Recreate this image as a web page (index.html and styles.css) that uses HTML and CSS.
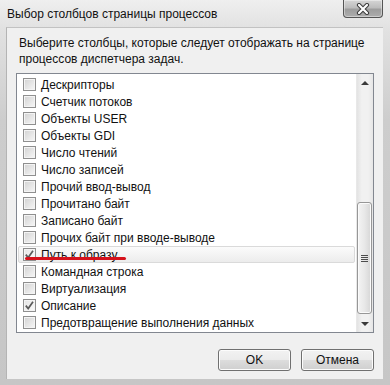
FILE: index.html
```html
<!DOCTYPE html>
<html lang="ru">
<head>
    <meta charset="UTF-8">
    <title>Выбор столбцов страницы процессов</title>
    <link rel="stylesheet" href="styles.css">
</head>
<body>
    <div class="window">
        <div class="titlebar">
            <span class="title">Выбор столбцов страницы процессов</span>
            <button class="close-btn" type="button">
                <svg width="14" height="12" viewBox="0 0 14 12">
                    <path d="M3 2 L11 10 M11 2 L3 10" stroke="#3c3c3c" stroke-width="4.2" stroke-linecap="round"/>
                    <path d="M3 2 L11 10 M11 2 L3 10" stroke="#ffffff" stroke-width="2.2" stroke-linecap="round"/>
                </svg>
            </button>
        </div>

        <div class="client">
            <p class="hint">Выберите столбцы, которые следует отображать на странице<br>процессов диспетчера задач.</p>

            <div class="listbox">
                <ul class="items">
                    <li class="item"><span class="check"></span>Дескрипторы</li>
                    <li class="item"><span class="check"></span>Счетчик потоков</li>
                    <li class="item"><span class="check"></span>Объекты USER</li>
                    <li class="item"><span class="check"></span>Объекты GDI</li>
                    <li class="item"><span class="check"></span>Число чтений</li>
                    <li class="item"><span class="check"></span>Число записей</li>
                    <li class="item"><span class="check"></span>Прочий ввод-вывод</li>
                    <li class="item"><span class="check"></span>Прочитано байт</li>
                    <li class="item"><span class="check"></span>Записано байт</li>
                    <li class="item"><span class="check"></span>Прочих байт при вводе-выводе</li>
                    <li class="item hot">
                        <span class="check checked">
                            <svg width="11" height="11" viewBox="0 0 11 11"><path d="M1.8 5.6 L4.2 8.6 L9 1.8" fill="none" stroke="#5a5a5a" stroke-width="1.7"/></svg>
                        </span>Путь к образу
                    </li>
                    <li class="item"><span class="check"></span>Командная строка</li>
                    <li class="item"><span class="check"></span>Виртуализация</li>
                    <li class="item">
                        <span class="check checked">
                            <svg width="11" height="11" viewBox="0 0 11 11"><path d="M1.8 5.6 L4.2 8.6 L9 1.8" fill="none" stroke="#5a5a5a" stroke-width="1.7"/></svg>
                        </span>Описание
                    </li>
                    <li class="item"><span class="check"></span>Предотвращение выполнения данных</li>
                </ul>

                <div class="scrollbar">
                    <span class="arrow up"></span>
                    <div class="track">
                        <div class="thumb"><span class="grip"></span></div>
                    </div>
                    <span class="arrow down"></span>
                </div>
            </div>

            <div class="buttons">
                <button type="button" class="btn">OK</button>
                <button type="button" class="btn">Отмена</button>
            </div>
        </div>
    </div>
</body>
</html>
```

FILE: styles.css
```css
body {
    margin: 0;
    background: #ffffff;
    font-family: "Liberation Sans", Arial, sans-serif;
    font-size: 12px;
    color: #000;
}

.window {
    width: 390px;
    height: 385px;
    display: flex;
    flex-direction: column;
    background: linear-gradient(#efefef 0, #e2e2e2 27px, #cdcdcd 120px, #c6c6c6 100%);
}

/* title bar */
.titlebar {
    height: 27px;
    display: flex;
    justify-content: space-between;
    align-items: flex-start;
    padding-left: 7px;
    padding-right: 7px;
}

.title {
    font-size: 12px;
    line-height: 28px;
    color: #111;
}

.close-btn {
    width: 40px;
    height: 18px;
    margin: 0;
    padding: 0;
    border: 1px solid #555555;
    border-top: none;
    border-radius: 0 0 4px 4px;
    background: linear-gradient(#d6d6d6 0, #bdbdbd 45%, #9d9d9d 55%, #adadad 100%);
    box-shadow: inset 0 0 0 1px rgba(255, 255, 255, 0.4);
    display: flex;
    align-items: center;
    justify-content: center;
}

/* client area */
.client {
    flex: 1;
    margin: 0 7px 6px 6px;
    border-left: 1px solid #b4b4b4;
    border-top: 1px solid #c2c2c2;
    background: #f0f0f0;
    padding: 7px 9px 8px 9px;
    display: flex;
    flex-direction: column;
}

.hint {
    margin: 0;
    padding-left: 3px;
    line-height: 16px;
    white-space: nowrap;
    color: #111;
}

/* list with checkboxes */
.listbox {
    margin-top: 6px;
    height: 260px;
    box-sizing: border-box;
    border: 1px solid #828790;
    background: #ffffff;
    display: flex;
}

.items {
    flex: 1;
    list-style: none;
    margin: 0;
    padding: 2px 0 0 0;
}

.item {
    position: relative;
    height: 17px;
    margin: 0 1px;
    padding-left: 5px;
    box-sizing: border-box;
    display: flex;
    align-items: center;
    white-space: nowrap;
    color: #111;
}

.item.hot {
    border: 1px solid #dadada;
    border-radius: 2px;
    padding-left: 4px;
    background: linear-gradient(#fbfbfb, #ececec);
}

.item.hot::after {
    content: "";
    position: absolute;
    left: 6px;
    top: 10px;
    width: 101px;
    height: 3px;
    border-radius: 2px;
    background: #d5111b;
}

.check {
    width: 13px;
    height: 13px;
    box-sizing: border-box;
    margin-right: 5px;
    border: 1px solid #8f8f8f;
    background: linear-gradient(135deg, #d2d2d2, #f7f7f7);
    box-shadow: inset 0 0 0 1px #f4f4f4;
    display: flex;
    align-items: center;
    justify-content: center;
    flex-shrink: 0;
}

.check.checked {
    background: linear-gradient(135deg, #e4e4e4, #fbfbfb);
}

/* scrollbar */
.scrollbar {
    width: 17px;
    display: flex;
    flex-direction: column;
    background: linear-gradient(90deg, #e3e3e3, #f1f1f1 30%, #f1f1f1 70%, #e6e6e6);
    border-left: 1px solid #e8e8e8;
    box-sizing: border-box;
}

.arrow {
    height: 17px;
    display: flex;
    align-items: center;
    justify-content: center;
}

.arrow::before {
    content: "";
    border-left: 4px solid transparent;
    border-right: 4px solid transparent;
}

.arrow.up::before {
    border-bottom: 4px solid #3a3a3a;
}

.arrow.down::before {
    border-top: 4px solid #3a3a3a;
}

.track {
    flex: 1;
    display: flex;
    flex-direction: column;
    justify-content: flex-end;
}

.thumb {
    height: 110px;
    margin: 0 1px 1px 0;
    border: 1px solid #979797;
    border-radius: 3px;
    background: linear-gradient(90deg, #f4f4f4, #e8e8e8 50%, #d6d6d6);
    box-shadow: inset 0 0 0 1px #fbfbfb;
    display: flex;
    align-items: center;
    justify-content: center;
}

.grip {
    width: 7px;
    height: 7px;
    background: repeating-linear-gradient(#4c4c4c 0, #4c4c4c 1px, transparent 1px, transparent 2px);
}

/* dialog buttons */
.buttons {
    margin-top: 16px;
    display: flex;
    justify-content: flex-end;
    gap: 10px;
}

.btn {
    width: 73px;
    height: 22px;
    margin: 0;
    padding: 0;
    font-family: "Liberation Sans", Arial, sans-serif;
    font-size: 12px;
    color: #111;
    border: 1px solid #707070;
    border-radius: 3px;
    background: linear-gradient(#f2f2f2 0, #ebebeb 50%, #dddddd 51%, #cfcfcf 100%);
    box-shadow: inset 0 0 0 1px #fcfcfc;
}
```
